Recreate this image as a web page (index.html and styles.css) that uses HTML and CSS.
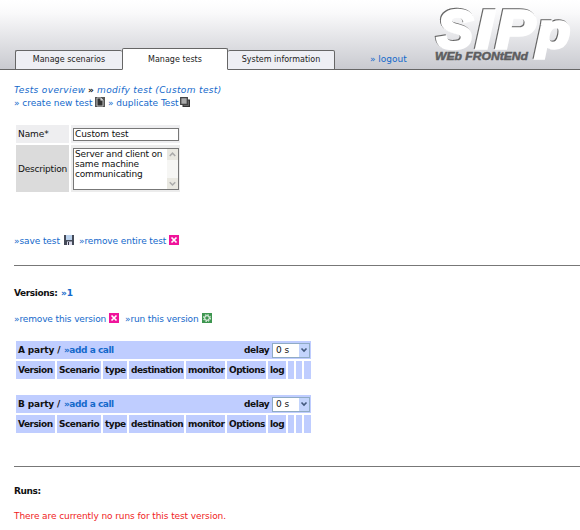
FILE: index.html
```html
<!DOCTYPE html>
<html lang="en">
<head>
<meta charset="utf-8">
<title>SIPp Web Frontend</title>
<link rel="stylesheet" href="styles.css">
</head>
<body>
<header class="header">
  <nav class="tabs">
    <a class="tab">Manage scenarios</a>
    <a class="tab active">Manage tests</a>
    <a class="tab">System information</a>
  </nav>
  <a class="logout">» logout</a>
  <svg class="logo" width="150" height="68" viewBox="430 0 150 68">
    <g class="logo-big">
      <text x="437" y="47.5" textLength="36" lengthAdjust="spacingAndGlyphs">S</text>
      <text x="476" y="47.5" textLength="17" lengthAdjust="spacingAndGlyphs">I</text>
      <text x="496" y="47.5" textLength="39" lengthAdjust="spacingAndGlyphs">P</text>
      <text class="logo-p" x="537" y="48" textLength="33" lengthAdjust="spacingAndGlyphs">p</text>
    </g>
    <text class="logo-sub" x="435" y="60" textLength="93" lengthAdjust="spacingAndGlyphs">WEb FRONtENd</text>
  </svg>
</header>
<main class="content">
  <div class="row crumbs"><a class="c1">Tests overview</a><b>»</b><a class="c2">modify test (Custom test)</a></div>
  <div class="row actions">
    <a class="create">» create new test</a>
    <svg class="icon" viewBox="0 0 10 10"><rect width="10" height="10" fill="#555"/><path d="M2 1h4l2 2v6H2z" fill="#333" stroke="#ddd" stroke-width=".8"/><path d="M5.5 1v2.5H8" fill="#eee"/></svg>
    <a class="duplicate">» duplicate Test</a>
    <svg class="icon" viewBox="0 0 10 10"><path d="M2.5 2.5H10V10H2.5z" fill="#333"/><path d="M.7.7h6.6v6.6H.7z" fill="#aaa" stroke="#444" stroke-width="1.3"/><path d="M3.5 8.5h5v-5" fill="none" stroke="#888" stroke-width=".6"/></svg>
  </div>
  <div class="form">
    <label class="cell light">Name*</label>
    <div class="cell light"><div class="input">Custom test</div></div>
    <label class="cell dark">Description</label>
    <div class="cell mid"><div class="input area"><p><span>Server and client on</span><br><span>same machine</span><br><span>communicating</span></p>
      <div class="scroll"><svg viewBox="0 0 10 10"><path d="M2.5 6.3L5 3.8l2.5 2.5"/></svg><svg viewBox="0 0 10 10"><path d="M2.5 3.8L5 6.3l2.5-2.5"/></svg></div></div></div>
  </div>
  <div class="row save">
    <a class="save-link">»save test</a>
    <svg class="icon" viewBox="0 0 10 10"><rect width="10" height="10" fill="#454b58"/><path d="M2 0h6v5H2z" fill="#bcd3ee"/><path d="M3 6.5h5V10H3z" fill="#dde"/><path d="M4 7h1v3H4z" fill="#334"/></svg>
    <a class="remove-all">»remove entire test</a>
    <svg class="icon" viewBox="0 0 10 10"><rect width="10" height="10" fill="#f0149b"/><path d="M2.5 2.5l5 5m0-5l-5 5" stroke="#fff" stroke-width="1.7"/></svg>
  </div>
  <hr class="rule first">
  <div class="row versions"><b class="v-label">Versions:</b><a class="v-one">»1</a></div>
  <div class="row version-actions">
    <a class="remove-version">»remove this version</a>
    <svg class="icon" viewBox="0 0 10 10"><rect width="10" height="10" fill="#f0149b"/><path d="M2.5 2.5l5 5m0-5l-5 5" stroke="#fff" stroke-width="1.7"/></svg>
    <a class="run-version">»run this version</a>
    <svg class="icon" viewBox="0 0 10 10"><rect width="10" height="10" fill="#3e9650"/><circle cx="5" cy="5" r="3.3" fill="none" stroke="#e8f5e8" stroke-width="1.2" stroke-dasharray="1.5 1.1"/><circle cx="5" cy="5" r="2.3" fill="none" stroke="#fff"/></svg>
  </div>
  <section class="party">
    <div class="party-head"><b class="p-name">A party /</b><a class="add">»add a call</a><b class="delay">delay</b><div class="select"><span>0 s</span><i><svg viewBox="0 0 10 12"><path d="M2.5 4.5L5 7l2.5-2.5"/></svg></i></div></div>
    <div class="party-cols"><b>Version</b><b>Scenario</b><b>type</b><b>destination</b><b>monitor</b><b>Options</b><b>log</b><b></b><b></b><b></b></div>
  </section>
  <section class="party">
    <div class="party-head"><b class="p-name">B party /</b><a class="add">»add a call</a><b class="delay">delay</b><div class="select"><span>0 s</span><i><svg viewBox="0 0 10 12"><path d="M2.5 4.5L5 7l2.5-2.5"/></svg></i></div></div>
    <div class="party-cols"><b>Version</b><b>Scenario</b><b>type</b><b>destination</b><b>monitor</b><b>Options</b><b>log</b><b></b><b></b><b></b></div>
  </section>
  <hr class="rule second">
  <div class="row runs"><b>Runs:</b></div>
  <div class="row empty">There are currently no runs for this test version.</div>
</main>
</body>
</html>
```
FILE: styles.css
```css
* { box-sizing: border-box; }
body { margin: 0; width: 580px; height: 530px; overflow: hidden; background: #fff; color: #111; font: 9px/12px "DejaVu Sans", sans-serif; white-space: nowrap; }
a { color: #1469cb; }
p { margin: 0; }
.header { height: 70px; display: flex; align-items: flex-end; padding-left: 15px; background: linear-gradient(#fff, #fafafb 18%, #c9cad0); border-bottom: 1px solid #666; }
.tabs { display: flex; align-items: flex-end; width: 320px; margin-bottom: -1px; }
.tab { width: 107px; height: 20px; padding-top: 3px; text-align: center; background: #eeeff4; border: 1px solid #666; border-radius: 2px 2px 0 0; color: #222; font-size: 8px; }
.tab.active { width: 106px; height: 22px; padding-top: 5px; background: #fff; border-bottom-color: #fff; }
.tab:first-child { border-right: 0; }
.tab:last-child { border-left: 0; }
.logout { width: 60px; margin: 0 0 4px 35px; }
.logo { display: block; width: 150px; height: 68px; margin-bottom: 1px; overflow: visible; }
.logo-big { font: italic bold 53px "Liberation Sans", Arial, sans-serif; fill: #fff; stroke: #fff; stroke-width: 3.4px; filter: drop-shadow(-.9px -.8px .5px #666); }
.logo-p { font-size: 48px; }
.logo-sub { font: italic bold 11px "Liberation Sans", Arial, sans-serif; fill: #5d5d60; stroke: #5d5d60; stroke-width: .5px; }
.content { padding-left: 14px; }
.row { display: flex; align-items: center; height: 12px; }
.row a, .empty { letter-spacing: -.09px; }
.icon { width: 10px; height: 10px; flex: none; position: relative; top: -1px; }
.crumbs { margin-top: 14px; font-style: italic; }
.crumbs b { width: 9px; font-style: normal; }
.crumbs a { letter-spacing: .36px; }
.c1 { width: 74px; }
.actions { margin-top: 1px; }
.row.actions a { letter-spacing: 0; }
.create { width: 81px; }
.duplicate { width: 72px; margin-left: 3px; }
.form { display: grid; grid-template-columns: 53px 109px; grid-template-rows: 18px 47px; gap: 2px; margin: 16px 0 0 2px; letter-spacing: -.1px; }
.cell { display: flex; align-items: center; padding: 0 2px; }
.cell.dark { letter-spacing: -.2px; }
.light { background: #eeeef0; }
.mid { background: #ececec; }
.dark { background: #dbdbdb; }
.input { width: 106px; height: 13px; flex: none; padding-left: 1px; background: #fff; border: 1px solid #777; line-height: 11px; }
.area { display: flex; justify-content: space-between; height: 42px; padding-top: 0; line-height: 10px; letter-spacing: -.18px; }
.scroll { display: flex; flex-direction: column; justify-content: space-between; width: 11px; background: #f6f6f4; }
.scroll svg { width: 11px; height: 11px; background: #e9e8e1; fill: none; stroke: #aaa; stroke-width: 1.4; }
.save { margin-top: 43px; }
.save-link { width: 50px; }
.remove-all { width: 90px; margin-left: 5px; }
.rule { height: 1px; margin: 0; border: 0; background: #777; }
.first { margin-top: 18px; }
.versions, .runs { letter-spacing: -.4px; }
.versions { margin-top: 21px; }
.v-label { width: 47px; }
.row .v-one { font-weight: bold; letter-spacing: 0; }
.version-actions { margin-top: 14px; }
.row.version-actions a { letter-spacing: -.13px; }
.remove-version { width: 95px; }
.run-version { width: 77px; margin-left: 6px; }
.party { width: 295px; margin: 16px 0 0 2px; }
.party-head { display: flex; align-items: center; height: 18px; padding-left: 2px; background: #bfcdff; margin-bottom: 2px; font-weight: bold; }
.p-name { width: 46px; letter-spacing: -.15px; }
.add { width: 180px; letter-spacing: -.45px; }
.delay { width: 28px; letter-spacing: -.4px; }
.select { display: flex; justify-content: space-between; width: 38px; height: 15px; padding: 0 0 0 3px; background: #fff; border: 1px solid #8fabc5; font-weight: normal; }
.select i { width: 10px; background: #c3d4fc; }
.select svg { display: block; width: 10px; height: 12px; fill: none; stroke: #43597d; stroke-width: 1.6; }
.party-cols { display: grid; grid-template-columns: 39px 44px 24px 55px 39px 39px 18px 6px 6px 7px; gap: 2px; height: 18px; }
.party-cols b { padding-left: 2px; background: #bfcdff; line-height: 18px; letter-spacing: -.5px; }
.second { margin-top: 33px; }
.runs { margin-top: 18px; }
.empty { margin-top: 13px; color: #f01c24; }
```
